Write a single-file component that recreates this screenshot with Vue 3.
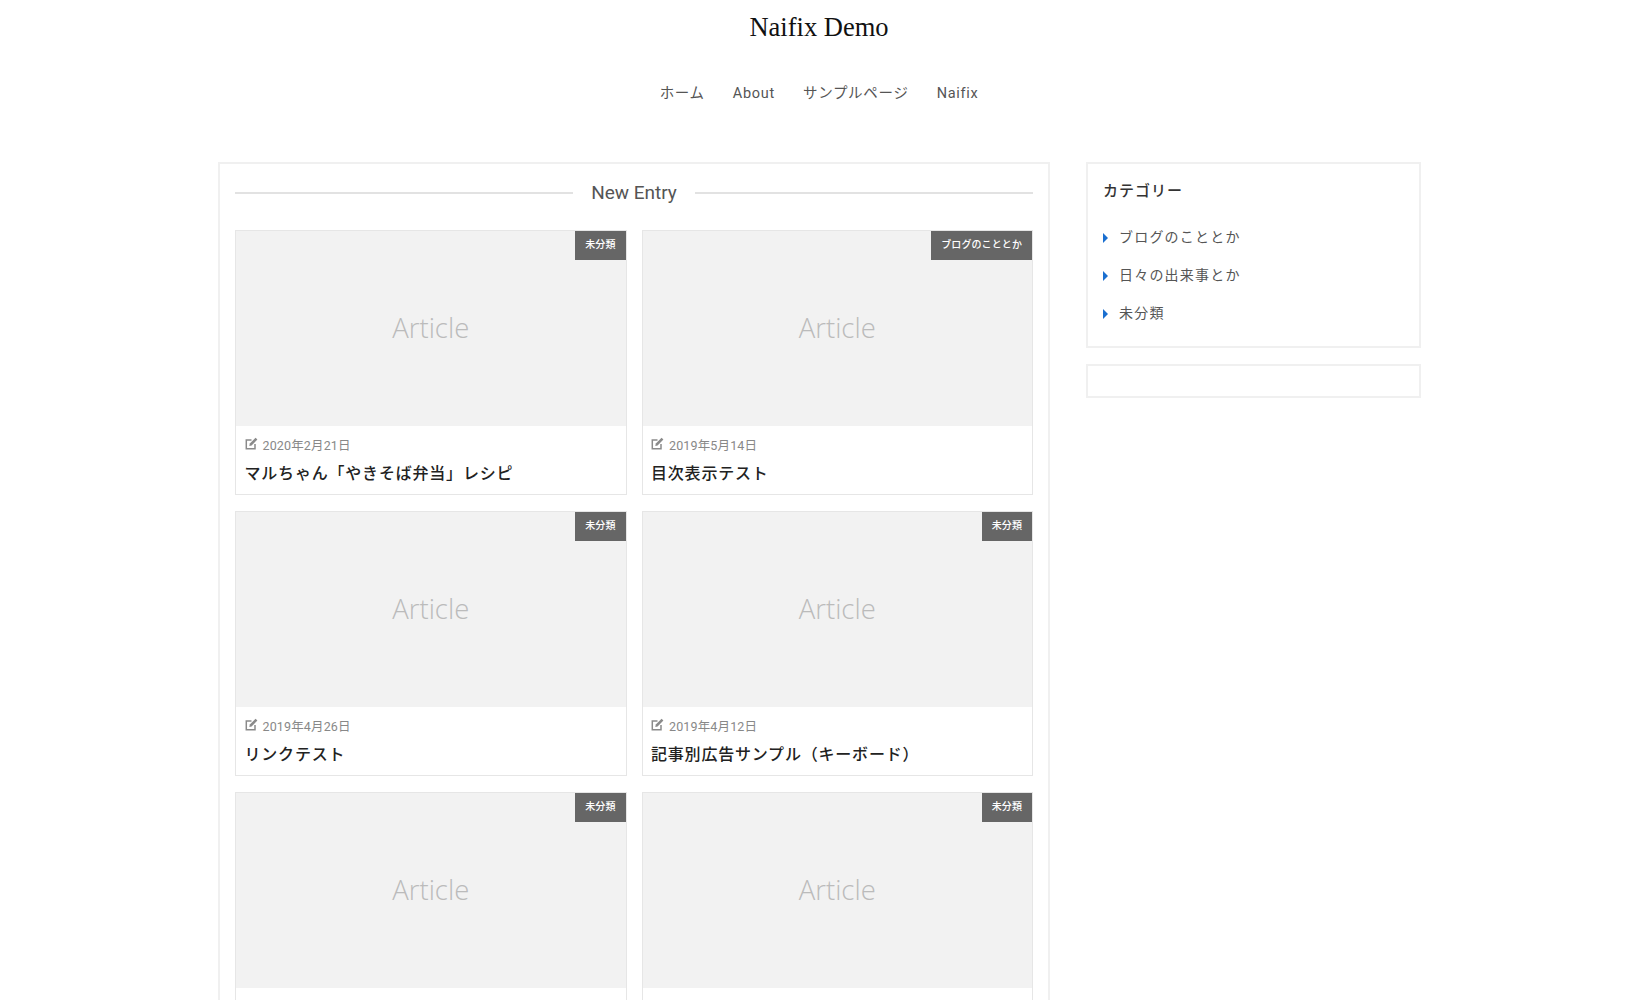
<script setup>
const nav = ['ホーム', 'About', 'サンプルページ', 'Naifix']
const cards = [
  { cat: '未分類', date: '2020年2月21日', title: 'マルちゃん「やきそば弁当」レシピ' },
  { cat: 'ブログのこととか', date: '2019年5月14日', title: '目次表示テスト' },
  { cat: '未分類', date: '2019年4月26日', title: 'リンクテスト' },
  { cat: '未分類', date: '2019年4月12日', title: '記事別広告サンプル（キーボード）' },
  { cat: '未分類', date: '', title: '' },
  { cat: '未分類', date: '', title: '' },
]
const cats = ['ブログのこととか', '日々の出来事とか', '未分類']
</script>

<template>
  <div class="page">
    <header class="header">
      <h1 class="logo">Naifix Demo</h1>
      <nav class="nav">
        <a v-for="n in nav" :key="n">{{ n }}</a>
      </nav>
    </header>
    <div class="layout">
      <main class="main">
        <h2 class="heading"><span>New Entry</span></h2>
        <div class="grid">
          <article v-for="(c, i) in cards" :key="i" class="card">
            <div class="thumb">
              <span class="badge">{{ c.cat }}</span>
              <span class="ph">Article</span>
            </div>
            <div class="body">
              <div v-if="c.date" class="date">
                <svg width="13" height="13" viewBox="0 0 13 13" class="edit">
                  <path d="M10 7V11.7H1.3V3H6.5" fill="none" stroke="#8a8a8a" stroke-width="1.5" />
                  <path d="M4.3 9L4.8 6.5L10.6 .8L12.4 2.6L6.6 8.4Z" fill="#8a8a8a" />
                </svg>
                <span>{{ c.date }}</span>
              </div>
              <h3 class="title">{{ c.title }}</h3>
            </div>
          </article>
        </div>
      </main>
      <aside class="side">
        <section class="widget">
          <h3 class="wtitle">カテゴリー</h3>
          <ul class="list">
            <li v-for="c in cats" :key="c">{{ c }}</li>
          </ul>
        </section>
        <section class="widget empty"></section>
      </aside>
    </div>
  </div>
</template>

<style>
html, body { overflow: hidden; background: #fff; }
</style>

<style scoped>
.page {
  font-family: Roboto, "Noto Sans CJK JP", "Noto Sans", sans-serif;
  color: #333;
  height: 1000px;
  overflow: hidden;
}
.header { text-align: center; padding-left: 5px; }
.logo {
  margin: 0;
  padding-top: 9px;
  font: 400 26.5px/36px "Liberation Serif", serif;
  color: #111;
}
.nav {
  display: flex;
  justify-content: center;
  gap: 28px;
  margin-top: 37px;
  font-size: 14.5px;
  font-weight: 400;
  line-height: 24px;
  letter-spacing: .7px;
  color: #555;
}
.layout {
  display: flex;
  gap: 36px;
  width: 1204px;
  margin: 56px 0 0 218px;
  align-items: flex-start;
}
.main {
  width: 832px;
  flex: none;
  box-sizing: border-box;
  border: 2px solid #f0f0f0;
  padding: 0 15px 16px;
}
.heading {
  display: flex;
  align-items: center;
  gap: 18px;
  margin: 0;
  height: 65.5px;
  padding-bottom: 8px;
  box-sizing: border-box;
  font-size: 19px;
  font-weight: 400;
  color: #555;
}
.heading::before, .heading::after {
  content: "";
  flex: 1;
  height: 2px;
  background: #e2e2e2;
}
.grid {
  display: grid;
  grid-template-columns: 391.5px 391.5px;
  gap: 16px 15px;
}
.card {
  border: 1px solid #e6e6e6;
  box-sizing: border-box;
  height: 265px;
}
.thumb {
  position: relative;
  height: 195px;
  background: #f2f2f2;
  display: flex;
  align-items: center;
  justify-content: center;
}
.ph {
  font: 300 27.5px/1 "Open Sans", sans-serif;
  color: #bbb;
}
.badge {
  position: absolute;
  top: 0;
  right: 0;
  height: 29px;
  padding: 0 10px;
  background: #666;
  color: #fff;
  font-size: 10px;
  font-weight: 500;
  line-height: 28px;
  letter-spacing: .1px;
}
.body { padding: 10px 8.5px 0; }
.date {
  display: flex;
  align-items: center;
  gap: 5px;
  height: 18px;
  font-size: 12.5px;
  letter-spacing: .15px;
  color: #888;
}
.edit { margin-top: -3px; }
.title {
  margin: 8px 0 0;
  font-size: 16px;
  line-height: 24px;
  font-weight: 500;
  letter-spacing: .8px;
  color: #222;
}
.side { width: 335px; flex: none; }
.widget {
  border: 2px solid #f0f0f0;
  box-sizing: border-box;
  height: 186px;
  padding: 16px 15px;
  margin-bottom: 16px;
}
.widget.empty { height: 34px; padding: 0; }
.wtitle {
  margin: 0;
  font-size: 15px;
  line-height: 22px;
  font-weight: 500;
  letter-spacing: 1px;
  color: #333;
}
.list { list-style: none; margin: 23.5px 0 0; padding: 0; }
.list li {
  position: relative;
  padding-left: 16px;
  font-size: 14px;
  font-weight: 400;
  line-height: 22px;
  margin-bottom: 16px;
  letter-spacing: 1.2px;
  color: #555;
}
.list li::before {
  content: "";
  position: absolute;
  left: 0;
  top: 7px;
  border-left: 5px solid #1a6fd0;
  border-top: 5px solid transparent;
  border-bottom: 5px solid transparent;
}
</style>
